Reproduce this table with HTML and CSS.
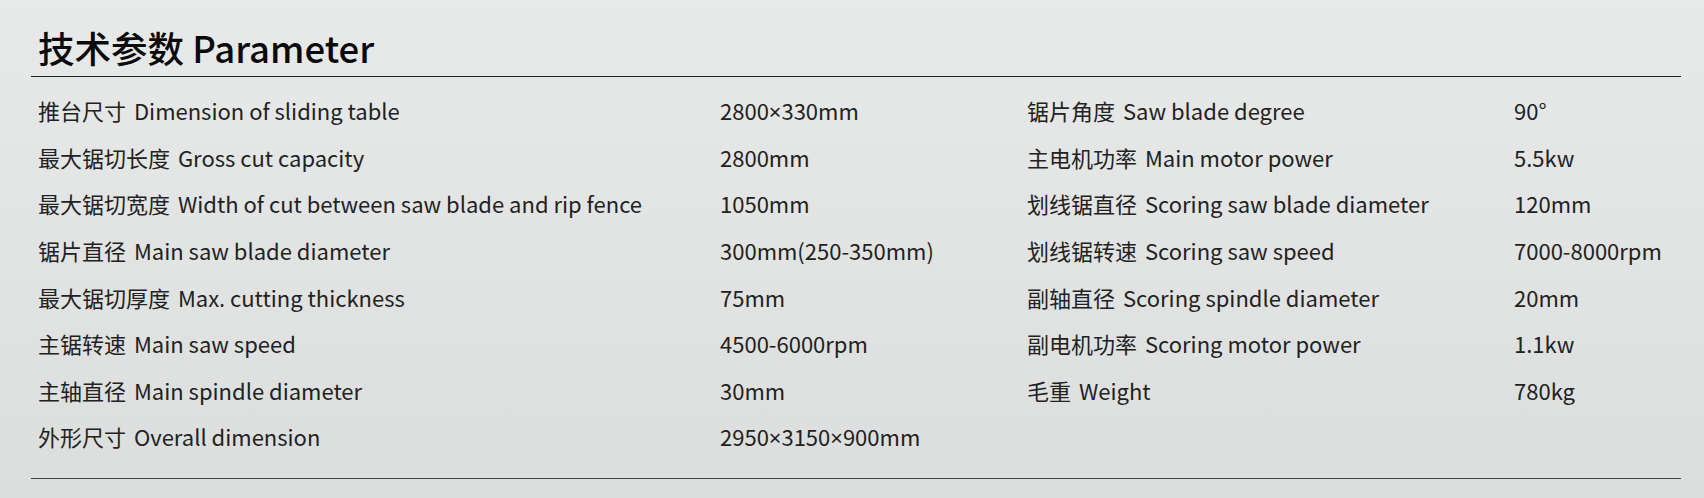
FILE: index.html
```html
<!DOCTYPE html>
<html lang="zh">
<head>
<meta charset="utf-8">
<title>技术参数 Parameter</title>
<link rel="stylesheet" href="styles.css">
</head>
<body>
<section class="spec">
  <h1 class="spec-title"><span class="zh">技术参数</span> Parameter</h1>
  <div class="spec-body">
    <div class="spec-grid">
      <div class="lbl"><span class="zh">推台尺寸</span> Dimension of sliding table</div><div class="val">2800<span class="x">×</span>330mm</div><div class="lbl"><span class="zh">锯片角度</span> Saw blade degree</div><div class="val">90°</div>
      <div class="lbl"><span class="zh">最大锯切长度</span> Gross cut capacity</div><div class="val">2800mm</div><div class="lbl"><span class="zh">主电机功率</span> Main motor power</div><div class="val">5.5kw</div>
      <div class="lbl"><span class="zh">最大锯切宽度</span> Width of cut between saw blade and rip fence</div><div class="val">1050mm</div><div class="lbl"><span class="zh">划线锯直径</span> Scoring saw blade diameter</div><div class="val">120mm</div>
      <div class="lbl"><span class="zh">锯片直径</span> Main saw blade diameter</div><div class="val">300mm(250-350mm)</div><div class="lbl"><span class="zh">划线锯转速</span> Scoring saw speed</div><div class="val">7000-8000rpm</div>
      <div class="lbl"><span class="zh">最大锯切厚度</span> Max. cutting thickness</div><div class="val">75mm</div><div class="lbl"><span class="zh">副轴直径</span> Scoring spindle diameter</div><div class="val">20mm</div>
      <div class="lbl"><span class="zh">主锯转速</span> Main saw speed</div><div class="val">4500-6000rpm</div><div class="lbl"><span class="zh">副电机功率</span> Scoring motor power</div><div class="val">1.1kw</div>
      <div class="lbl"><span class="zh">主轴直径</span> Main spindle diameter</div><div class="val">30mm</div><div class="lbl"><span class="zh">毛重</span> Weight</div><div class="val">780kg</div>
      <div class="lbl"><span class="zh">外形尺寸</span> Overall dimension</div><div class="val">2950<span class="x">×</span>3150<span class="x">×</span>900mm</div><div class="lbl"></div><div class="val"></div>
    </div>
  </div>
</section>
</body>
</html>
```
FILE: styles.css
```css
html, body {
  margin: 0;
  padding: 0;
}
body {
  width: 1704px;
  height: 498px;
  background: linear-gradient(180deg, #e8e9e9 0%, #dcdddd 100%);
  font-family: "Noto Sans CJK SC", "Noto Sans", sans-serif;
  color: #222;
  overflow: hidden;
}
.spec {
  margin-left: 31px;
  width: 1650px;
  padding-top: 23px;
}
.spec-title {
  margin: 0;
  padding-left: 7px;
  font-size: 36.5px;
  font-weight: 500;
  line-height: 50px;
  color: #0a0a0a;
  border-bottom: 1px solid #222;
  padding-bottom: 3px;
}
.spec-body {
  border-bottom: 1.5px solid #444;
  padding: 10px 0 18px 7px;
}
.spec-grid {
  display: grid;
  grid-template-columns: 682px 307px 487px 1fr;
  grid-auto-rows: 46.6px;
  align-items: center;
  font-size: 22px;
  font-weight: 400;
}
.lbl, .val {
  white-space: nowrap;
}
.lbl .zh {
  margin-right: 3px;
}
.x {
  font-family: "Noto Sans", sans-serif;
}
```
